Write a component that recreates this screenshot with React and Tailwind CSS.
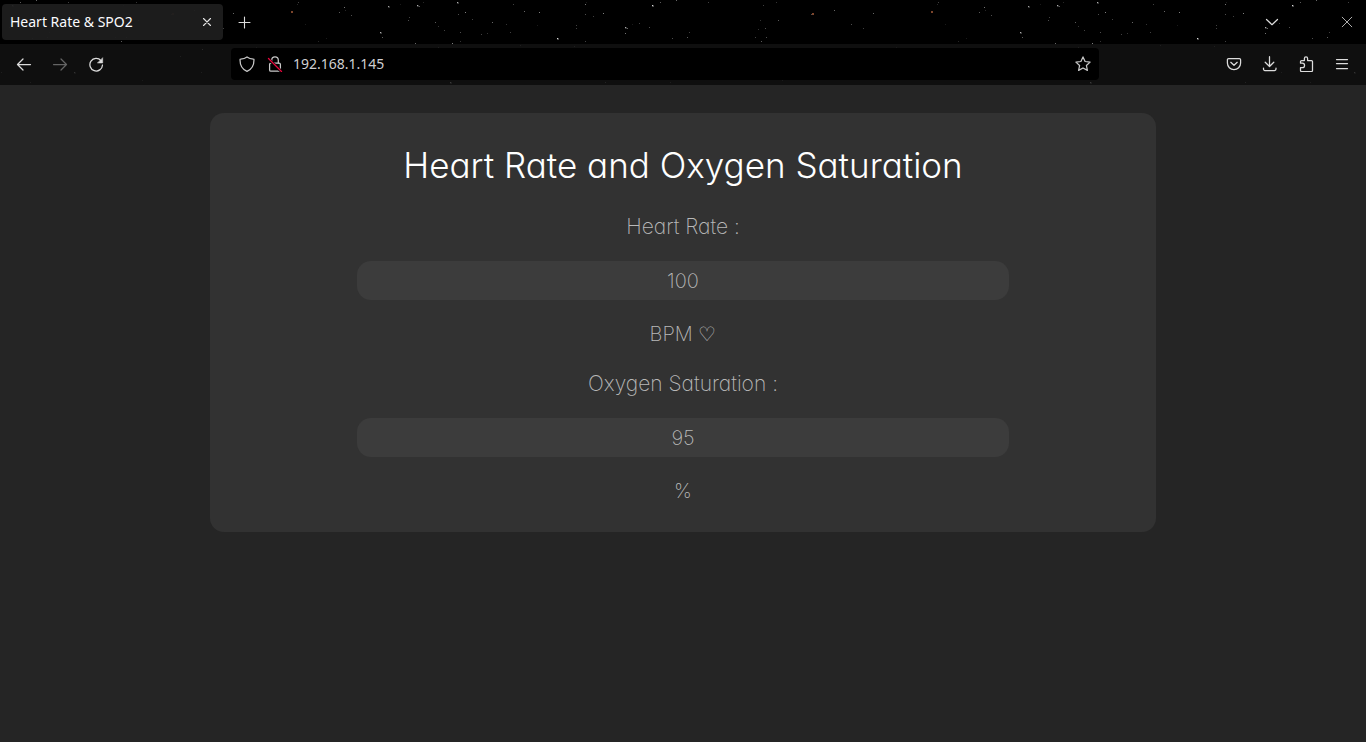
import React, { useState } from "react";

const STARS = [
  [12, 5, 0.8], [36, 0, 0.4], [68, 2, 0.25], [20, 2, 0.35], [32, 38, 0.3], [49, 32, 0.25], [47, 37, 0.35], [9, 27, 0.3],
  [121, 41, 0.35], [118, 29, 0.2], [120, 20, 0.2], [125, 28, 0.3], [138, 20, 0.35], [123, 5, 0.25], [136, 2, 0.2],
  [115, 37, 0.25], [126, 37, 0.3], [171, 14, 0.3], [194, 10, 0.4], [211, 24, 0.3], [233, 13, 0.4], [223, 28, 0.25],
  [202, 49, 0.5], [74, 72, 0.6], [201, 72, 0.3], [1, 72, 0.3], [180, 56, 0.3],
  [297, 4, 0.15], [298, 2, 0.25], [339, 12, 0.35], [344, 7, 0.45], [351, 15, 0.3], [388, 6, 0.55], [345, 10, 0.15],
  [380, 32, 0.6], [382, 37, 0.35], [318, 41, 0.15], [305, 24, 0.1], [326, 38, 0.1],
  [417, 5, 0.6], [419, 6, 0.35], [457, 2, 0.6], [465, 12, 0.5], [458, 14, 0.3], [435, 22, 0.35], [438, 26, 0.2],
  [409, 17, 0.25], [408, 20, 0.3], [415, 43, 0.4], [452, 43, 0.5], [444, 30, 0.25], [460, 32, 0.3], [460, 41, 0.2],
  [472, 19, 0.25], [481, 34, 0.25], [487, 33, 0.2], [492, 22, 0.4], [506, 24, 0.2], [510, 32, 0.25], [513, 4, 0.25],
  [524, 11, 0.4], [539, 12, 0.5], [537, 25, 0.1], [557, 38, 0.8], [576, 25, 0.25], [576, 28, 0.25], [585, 4, 0.45],
  [585, 14, 0.3], [586, 2, 0.1], [585, 41, 0.25], [593, 16, 0.25], [603, 13, 0.5], [625, 27, 0.6], [627, 28, 0.4],
  [625, 33, 0.45], [632, 24, 0.1], [639, 23, 0.25], [423, 2, 0.15], [400, 4, 0.1], [450, 82, 0.8], [605, 82, 0.4],
  [520, 45, 0.3], [574, 46, 0.3], [438, 47, 0.3], [30, 82, 0.3], [142, 80, 0.25], [256, 47, 0.2],
];

function Starfield() {
  return (
    <svg className="absolute inset-0 h-full w-full" aria-hidden="true">
      <defs>
        <pattern id="stars" width="640" height="85" patternUnits="userSpaceOnUse">
          {STARS.map(([x, y, o]) => (
            <g key={`${x}-${y}`} fill="#fff">
              <rect x={x} y={y} width="1" height="1" opacity={o} />
              {o > 0.5 && <rect x={x} y={y} width="2" height="2" opacity={o * 0.35} />}
            </g>
          ))}
          <rect x="291" y="11" width="2" height="2" fill="#7d452b" />
          <rect x="172" y="13" width="2" height="2" fill="#7d452b" />
        </pattern>
      </defs>
      <rect width="100%" height="100%" fill="url(#stars)" />
    </svg>
  );
}

function Icon({ children, className = "h-4 w-4" }) {
  return (
    <svg
      viewBox="0 0 16 16"
      className={className}
      fill="none"
      stroke="currentColor"
      strokeWidth="1.25"
      strokeLinecap="round"
      strokeLinejoin="round"
      aria-hidden="true"
    >
      {children}
    </svg>
  );
}

function IconButton({ label, disabled, children }) {
  return (
    <button
      type="button"
      aria-label={label}
      disabled={disabled}
      className="flex h-8 w-8 shrink-0 items-center justify-center rounded text-[#dcdcdc] disabled:text-[#646464]"
    >
      {children}
    </button>
  );
}

function TabBar() {
  return (
    <div className="relative flex h-11 items-center pl-0.5 pr-[3px]">
      <div className="flex h-9 w-[221px] items-center justify-between rounded bg-[#1e1e1e]/95 px-2">
        <span className="text-sm text-[#fbfbfe]">Heart Rate &amp; SPO2</span>
        <button type="button" aria-label="Close tab" className="flex h-4 w-4 items-center justify-center text-[#e4e4e4]">
          <Icon>
            <path d="M4.500 4.500l7 7M11.500 4.500l-7 7" strokeWidth="1.100" />
          </Icon>
        </button>
      </div>
      <div className="ml-[5px] flex grow items-center">
        <IconButton label="New tab">
          <Icon>
            <path d="M8.500 3v11M3 8.500h11" strokeWidth="1.100" />
          </Icon>
        </IconButton>
      </div>
      <div className="flex items-center gap-[43px]">
        <IconButton label="List all tabs">
          <Icon>
            <path d="M2.500 5.500L8 10.700l5.500-5.200" strokeWidth="1.200" />
          </Icon>
        </IconButton>
        <IconButton label="Close window">
          <Icon>
            <path d="M3.200 3.200l9.600 9.600M12.800 3.200l-9.600 9.600" strokeWidth="0.800" />
          </Icon>
        </IconButton>
      </div>
    </div>
  );
}

function Toolbar() {
  return (
    <div className="relative flex h-[41px] items-start bg-[#131313]/80 px-2 pt-1">
      <div className="flex gap-1">
        <IconButton label="Back">
          <Icon>
            <path d="M1.500 8.500h13M7 3L1.500 8.500 7 14" />
          </Icon>
        </IconButton>
        <IconButton label="Forward" disabled>
          <Icon>
            <path d="M1.500 8.500h13M9 3l5.500 5.500L9 14" />
          </Icon>
        </IconButton>
        <IconButton label="Reload">
          <Icon>
            <path d="M13 4.600A6.300 6.300 0 1 0 14.500 9" />
            <path d="M14.700 2v5h-5z" fill="currentColor" strokeWidth="0.500" />
          </Icon>
        </IconButton>
      </div>
      <div className="mx-[119px] flex h-8 min-w-0 flex-1 items-center rounded bg-black px-2 text-[#c8c8c8]">
        <Icon className="h-4 w-4 shrink-0">
          <path d="M8 .9C6.300 2.200 3.900 2.900 1.500 3.100c-.3 0-.5.3-.5.6 0 5.300 1.700 9.400 7 11.600 5.300-2.200 7-6.300 7-11.600 0-.3-.2-.6-.5-.6C12.100 2.900 9.700 2.200 8 .9z" />
        </Icon>
        <Icon className="ml-3 h-4 w-4 shrink-0">
          <path d="M4.700 7V4.200a3.300 3.300 0 0 1 6.600 0V7" />
          <rect x="2.600" y="7.200" width="10.800" height="8" rx="1.300" />
          <path d="M1.500 3l13 12.500" stroke="#000" strokeWidth="3" />
          <path d="M1.500 2.500l13 13" stroke="#e8063c" strokeWidth="1.300" />
        </Icon>
        <input
          type="text"
          aria-label="Address"
          defaultValue="192.168.1.145"
          className="ml-2.5 min-w-0 flex-1 bg-transparent text-sm text-[#cfcfd2] outline-none"
        />
        <button type="button" aria-label="Bookmark this page" className="flex h-4 w-4 shrink-0 items-center justify-center">
          <Icon>
            <path d="M8 .9l2.100 4.600 5 .6-3.700 3.400 1 4.900L8 12l-4.400 2.400 1-4.900L.9 6.100l5-.6z" />
          </Icon>
        </button>
      </div>
      <div className="flex gap-1">
        <IconButton label="Save to Pocket">
          <Icon>
            <path d="M2.600 2.500h10.800a1.200 1.200 0 0 1 1.200 1.200v3.400a6.600 6.600 0 0 1-13.200 0V3.700a1.200 1.200 0 0 1 1.200-1.200z" />
            <path d="M4.800 6.300L8 9.300l3.200-3" />
          </Icon>
        </IconButton>
        <IconButton label="Downloads">
          <Icon>
            <path d="M7.500.7v9.600M3.200 6.200l4.300 4.300 4.300-4.300M1.500 12v1.100a1.400 1.400 0 0 0 1.400 1.400h9.700a1.400 1.400 0 0 0 1.400-1.400V12" />
          </Icon>
        </IconButton>
        <IconButton label="Extensions">
          <Icon>
            <path d="M2.500 7.200V5.500a1 1 0 0 1 1-1h2.900V2.500a1.600 1.600 0 0 1 3.200 0v2h3.900a1 1 0 0 1 1 1v9a1 1 0 0 1-1 1h-10a1 1 0 0 1-1-1v-2.800h1.800a2.200 2.200 0 0 0 0-4.500z" />
          </Icon>
        </IconButton>
        <IconButton label="Open application menu">
          <Icon>
            <path d="M2.500 3.500h11M2.500 7.500h11M2.500 12.500h11" />
          </Icon>
        </IconButton>
      </div>
    </div>
  );
}

function Reading({ id, label, initial, children }) {
  const [value, setValue] = useState(initial);
  return (
    <>
      <label htmlFor={id} className="text-[21px] leading-[29px]">
        {label}
      </label>
      <input
        id={id}
        type="text"
        value={value}
        onChange={(e) => setValue(e.target.value)}
        className="h-[39px] w-full max-w-[652px] rounded-[14px] bg-[#3c3c3c] text-center outline-none"
      />
      <p>{children}</p>
    </>
  );
}

export default function App() {
  return (
    <div className="min-h-screen bg-[#252525] font-['Noto_Sans',sans-serif]">
      <header className="relative bg-black">
        <Starfield />
        <TabBar />
        <Toolbar />
      </header>
      <main className="px-4 py-7 font-['Inter','DejaVu_Sans',sans-serif] [font-feature-settings:'cv11']">
        <form
          className="mx-auto flex max-w-[946px] flex-col items-center gap-5 rounded-[14px] bg-[#323232] px-4 py-[26px] text-center text-xl font-extralight leading-[29px] text-[#b8b8b8]"
          onSubmit={(e) => e.preventDefault()}
        >
          <h1 className="text-[35px] font-light leading-[53px] text-white">Heart Rate and Oxygen Saturation</h1>
          <Reading id="heart-rate" label="Heart Rate :" initial="100">
            BPM <span className="font-['DejaVu_Sans']">♡</span>
          </Reading>
          <Reading id="oxygen" label="Oxygen Saturation :" initial="95">
            %
          </Reading>
        </form>
      </main>
    </div>
  );
}
